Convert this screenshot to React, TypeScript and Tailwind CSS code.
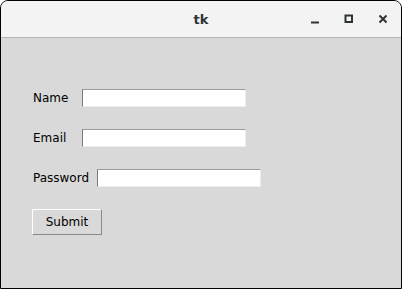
import React from "react";

function Entry({ width }: { width: string }) {
  return (
    <div
      className={`h-[18px] ${width} bg-white border-t border-l border-t-[#9a9a9a] border-l-[#7a7a7a] border-r border-b border-r-[#ececec] border-b-[#ececec]`}
    />
  );
}

export default function App() {
  return (
    <div
      className="w-[402px] h-[289px] flex flex-col border border-black rounded-t-[8px] overflow-hidden bg-[#d9d9d9]"
      style={{ fontFamily: '"DejaVu Sans", sans-serif' }}
    >
      <div className="h-[37px] shrink-0 grid grid-cols-[1fr_auto_1fr] items-center bg-[#f3f3f3] border-b border-[#b4b4b4]">
        <div />
        <div className="text-[13px] font-bold text-[#2e3436] leading-none pt-[1px]">tk</div>
        <div className="flex justify-end pr-[1px] text-[#2e3436]">
          <div className="w-[34px] flex justify-center">
            <svg width="16" height="16" viewBox="0 0 16 16">
              <rect x="4" y="10.5" width="8" height="2" fill="currentColor" />
            </svg>
          </div>
          <div className="w-[34px] flex justify-center">
            <svg width="16" height="16" viewBox="0 0 16 16">
              <rect x="4.5" y="4.5" width="6.5" height="6.5" fill="none" stroke="currentColor" strokeWidth="2" />
            </svg>
          </div>
          <div className="w-[34px] flex justify-center">
            <svg width="16" height="16" viewBox="0 0 16 16">
              <path d="M4.5 4.5 L11.5 11.5 M11.5 4.5 L4.5 11.5" stroke="currentColor" strokeWidth="2" />
            </svg>
          </div>
        </div>
      </div>
      <div className="flex flex-col gap-[22px] pl-[31px] pt-[51px] text-[12px] text-black">
        <div className="flex items-center h-[18px]">
          <span className="w-[50px] pl-[1px]">Name</span>
          <Entry width="w-[164px]" />
        </div>
        <div className="flex items-center h-[18px]">
          <span className="w-[50px] pl-[1px]">Email</span>
          <Entry width="w-[164px]" />
        </div>
        <div className="flex items-center h-[18px]">
          <span className="w-[65px] pl-[1px]">Password</span>
          <Entry width="w-[164px]" />
        </div>
        <div className="flex">
          <button className="w-[70px] h-[26px] flex items-center justify-center bg-[#d9d9d9] border border-t-white border-l-white border-r-[#8a8a8a] border-b-[#8a8a8a] text-[12px] text-black">
            Submit
          </button>
        </div>
      </div>
    </div>
  );
}
